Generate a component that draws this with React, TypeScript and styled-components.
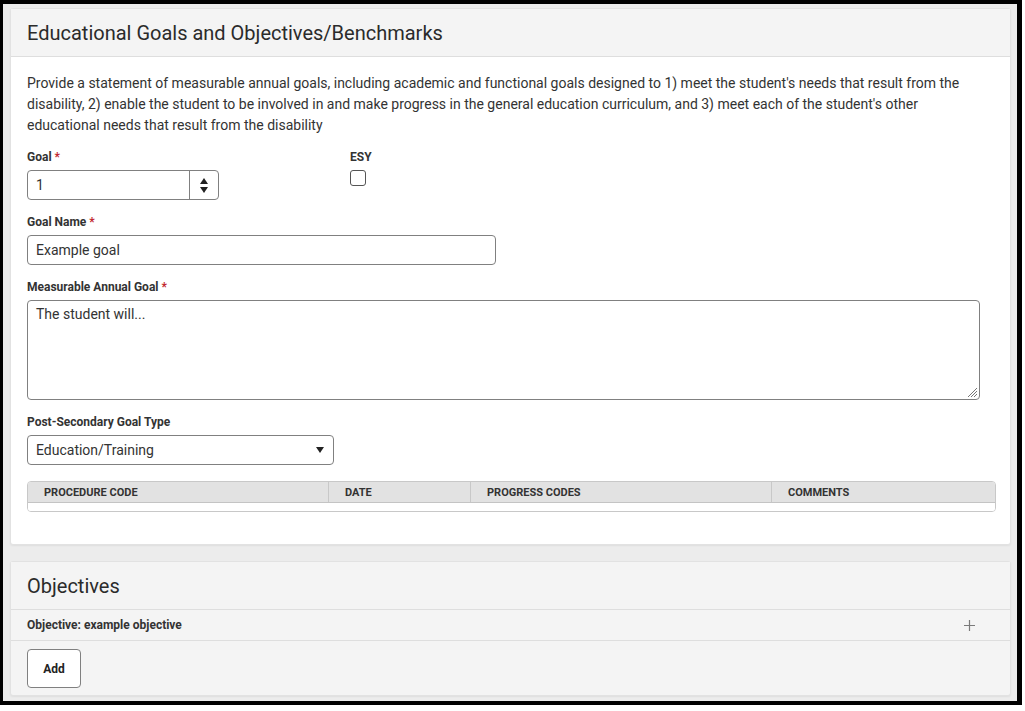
import styled, { createGlobalStyle } from 'styled-components'

const Global = createGlobalStyle`
  html, body { margin: 0; padding: 0; background: #fff; }
  body { font-family: Roboto, "Liberation Sans", Arial, sans-serif; color: #333; }
  * { box-sizing: border-box; }
`

const Frame = styled.div`
  width: 1022px;
  height: 705px;
  border-style: solid;
  border-color: #000;
  border-width: 4px 5px 4px 3px;
  background: #ececec;
  padding: 4px 6px 0 7px;
  display: flex;
  flex-direction: column;
  gap: 16px;
  overflow: hidden;
`

const Card = styled.section<{ $tint?: boolean }>`
  background: ${({ $tint }) => ($tint ? '#f4f4f4' : '#fff')};
  border: 1px solid #e2e2e2;
  border-radius: 3px;
  box-shadow: 0 1px 2px rgba(0, 0, 0, 0.06);
`

const CardHeader = styled.header`
  height: 48px;
  padding: 0 16px;
  display: flex;
  align-items: center;
  background: #f4f4f4;
  border-bottom: 1px solid #dedede;
`

const Title = styled.h2`
  margin: 0;
  font-size: 20px;
  font-weight: 400;
  color: #2b2b2b;
`

const Body = styled.div`
  padding: 16px 16px 32px;
`

const Intro = styled.p`
  margin: 0 0 13px;
  font-size: 14px;
  line-height: 21px;
  color: #333;
`

const Row = styled.div`
  display: grid;
  grid-template-columns: 323px 1fr;
`

const Field = styled.div`
  margin-bottom: 14px;
`

const Label = styled.label`
  display: block;
  font-size: 12px;
  font-weight: 700;
  line-height: 16px;
  margin-bottom: 5px;
  color: #333;
`

const Req = styled.span`
  color: #c1272d;
  margin-left: 3px;
`

const Box = styled.div<{ $w: string; $h?: number }>`
  width: ${({ $w }) => $w};
  height: ${({ $h }) => $h ?? 30}px;
  border: 1px solid #808080;
  border-radius: 4px;
  background: #fff;
  font-size: 14px;
  color: #333;
  display: flex;
  align-items: ${({ $h }) => ($h ? 'flex-start' : 'center')};
  padding: ${({ $h }) => ($h ? '5px 8px' : '0 0 0 8px')};
  position: relative;
`

const BoxText = styled.span`
  flex: 1;
`

const Spinner = styled.div`
  width: 29px;
  align-self: stretch;
  border-left: 1px solid #808080;
  display: flex;
  flex-direction: column;
  align-items: center;
  justify-content: center;
  gap: 3px;
`

const Tri = styled.span<{ $up?: boolean }>`
  width: 0;
  height: 0;
  border-left: 4px solid transparent;
  border-right: 4px solid transparent;
  ${({ $up }) => ($up ? 'border-bottom: 6px solid #222;' : 'border-top: 6px solid #222;')}
`

const SelectArrow = styled.span`
  width: 0;
  height: 0;
  margin-right: 9px;
  border-left: 4px solid transparent;
  border-right: 4px solid transparent;
  border-top: 6px solid #222;
`

const Grip = styled.svg`
  position: absolute;
  right: 1px;
  bottom: 1px;
`

const Check = styled.span`
  display: block;
  width: 16px;
  height: 16px;
  margin-top: 2px;
  border: 1px solid #555;
  border-radius: 3px;
  background: #fff;
`

const Table = styled.div`
  margin-top: 16px;
  width: 969px;
  border: 1px solid #c8c8c8;
  border-radius: 4px;
  overflow: hidden;
`

const THead = styled.div`
  display: grid;
  grid-template-columns: 300px 142px 301px 1fr;
  background: #e2e2e2;
  border-bottom: 1px solid #c4c4c4;
  height: 21px;
`

const Th = styled.div`
  font-size: 11px;
  font-weight: 700;
  text-transform: uppercase;
  color: #333;
  padding-left: 16px;
  display: flex;
  align-items: center;
  & + & {
    border-left: 1px solid #c8c8c8;
  }
`

const TBody = styled.div`
  height: 8px;
  background: #fff;
`

const ObjectiveRow = styled.div`
  height: 31px;
  padding: 0 35px 0 16px;
  display: flex;
  align-items: center;
  justify-content: space-between;
  border-bottom: 1px solid #dedede;
  font-size: 12px;
  font-weight: 700;
  color: #333;
`

const Actions = styled.div`
  padding: 8px 16px 7px;
`

const Button = styled.button`
  display: block;
  width: 54px;
  height: 39px;
  border: 1px solid #808080;
  border-radius: 4px;
  background: #fff;
  font-family: inherit;
  font-size: 12px;
  font-weight: 700;
  color: #222;
`

export default function App() {
  return (
    <>
      <Global />
      <Frame>
        <Card>
          <CardHeader>
            <Title>Educational Goals and Objectives/Benchmarks</Title>
          </CardHeader>
          <Body>
            <Intro>
              Provide a statement of measurable annual goals, including academic and functional goals designed to 1) meet the
              student's needs that result from the disability, 2) enable the student to be involved in and make progress in the
              general education curriculum, and 3) meet each of the student's other educational needs that result from the
              disability
            </Intro>
            <Row>
              <Field>
                <Label>
                  Goal<Req>*</Req>
                </Label>
                <Box $w="192px">
                  <BoxText>1</BoxText>
                  <Spinner>
                    <Tri $up />
                    <Tri />
                  </Spinner>
                </Box>
              </Field>
              <Field>
                <Label>ESY</Label>
                <Check />
              </Field>
            </Row>
            <Field>
              <Label>
                Goal Name<Req>*</Req>
              </Label>
              <Box $w="469px">
                <BoxText>Example goal</BoxText>
              </Box>
            </Field>
            <Field>
              <Label>
                Measurable Annual Goal<Req>*</Req>
              </Label>
              <Box $w="953px" $h={100}>
                <BoxText>The student will...</BoxText>
                <Grip width="10" height="10" viewBox="0 0 10 10">
                  <path d="M9 3 L3 9 M9 6 L6 9 M9 0 L0 9" stroke="#777" strokeWidth="1" />
                </Grip>
              </Box>
            </Field>
            <Field>
              <Label>Post-Secondary Goal Type</Label>
              <Box $w="307px">
                <BoxText>Education/Training</BoxText>
                <SelectArrow />
              </Box>
            </Field>
            <Table>
              <THead>
                <Th>Procedure Code</Th>
                <Th>Date</Th>
                <Th>Progress Codes</Th>
                <Th>Comments</Th>
              </THead>
              <TBody />
            </Table>
          </Body>
        </Card>
        <Card $tint>
          <CardHeader>
            <Title>Objectives</Title>
          </CardHeader>
          <ObjectiveRow>
            <span>Objective: example objective</span>
            <svg width="11" height="11" viewBox="0 0 11 11">
              <path d="M5.5 0 V11 M0 5.5 H11" stroke="#7a7a7a" strokeWidth="1.2" />
            </svg>
          </ObjectiveRow>
          <Actions>
            <Button>Add</Button>
          </Actions>
        </Card>
      </Frame>
    </>
  )
}
